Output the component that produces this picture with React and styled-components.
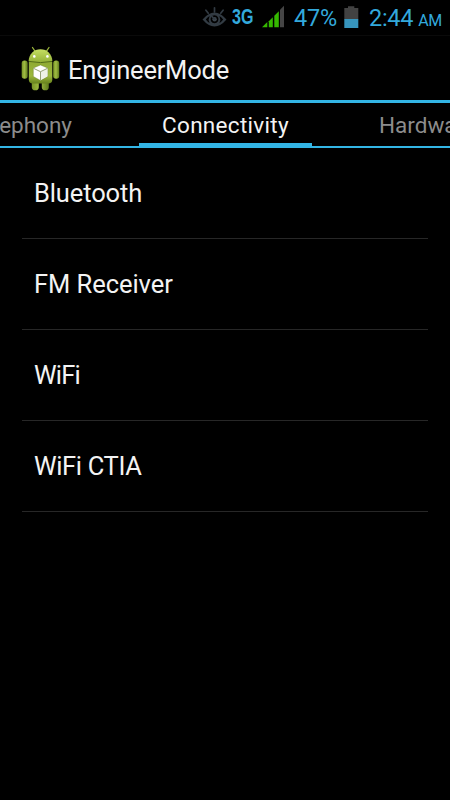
import React from 'react'
import styled, { createGlobalStyle } from 'styled-components'

const GlobalStyle = createGlobalStyle`
  body {
    margin: 0;
    background: #000;
  }
`

const Screen = styled.div`
  display: flex;
  flex-direction: column;
  width: 450px;
  height: 800px;
  overflow: hidden;
  background: #000;
  color: #f3f3f3;
  font-family: Roboto, sans-serif;
`

const StatusBar = styled.div`
  box-sizing: border-box;
  display: flex;
  align-items: flex-start;
  height: 36px;
  padding-left: 202px;
  border-bottom: 1px solid #0a0a0a;
  color: #33a9dc;

  svg {
    flex: none;
    display: block;
  }
`

const StatusItem = styled.div`
  flex: none;
  width: ${(props) => props.$width}px;
  margin-left: ${(props) => props.$gap}px;
  font-size: 23.5px;
  letter-spacing: ${(props) => props.$spacing || 0}px;
  line-height: 37px;
  white-space: nowrap;
`

const NetworkType = styled.span`
  display: block;
  font-family: 'Liberation Sans', sans-serif;
  font-size: 22px;
  font-weight: 700;
  line-height: 34px;
  transform: scaleX(0.73);
  transform-origin: 0 50%;
`

const Meridiem = styled.span`
  margin-left: 5px;
  font-size: 16px;
  letter-spacing: -0.4px;
`

const ActionBar = styled.header`
  display: flex;
  align-items: center;
  height: 64px;
  padding-left: 20px;
`

const Title = styled.h1`
  margin: 4px 0 0 8px;
  font-size: 25.5px;
  font-weight: 400;
  letter-spacing: -0.22px;
  line-height: 30px;
`

const TabStrip = styled.nav`
  box-sizing: border-box;
  display: flex;
  justify-content: space-between;
  height: 48px;
  border-top: 3px solid #33b5e5;
  box-shadow: inset 0 -2px #33b5e5;
`

const Tab = styled.div`
  box-sizing: border-box;
  display: flex;
  flex: none;
  justify-content: ${(props) => props.$align || 'center'};
  width: ${(props) => (props.$active ? 173 : 139)}px;
  height: 45px;
  padding: ${(props) => props.$padding || 0};
  border-bottom: ${(props) => (props.$active ? '5px solid #33b5e5' : 'none')};
  overflow: hidden;
  color: ${(props) => (props.$active ? '#f3f3f3' : '#8c8c8c')};
  font-size: 22.5px;
  letter-spacing: ${(props) => props.$spacing || 0}px;
  line-height: 45px;
  white-space: nowrap;
`

const List = styled.ul`
  margin: 0;
  padding: 0 22px;
  list-style: none;
`

const ListItem = styled.li`
  box-sizing: border-box;
  height: 91px;
  padding-left: 12px;
  border-bottom: 1px solid #272727;
  font-size: 25.5px;
  letter-spacing: ${(props) => props.$spacing || 0}px;
  line-height: 91px;
`

const EyeIcon = () => (
  <svg width="25" height="36" viewBox="0 0 25 36">
    <path
      fill="#323b43"
      fillRule="evenodd"
      d="M0.5 19.5Q12.5 5.5 24.5 19.5Q12.5 33.5 0.5 19.5ZM3.8 19.5Q5.5 17.2 7.6 16Q5.8 19.5 7.6 23Q5.5 21.8 3.8 19.5ZM21.2 19.5Q19.5 17.2 17.4 16Q19.2 19.5 17.4 23Q19.5 21.8 21.2 19.5ZM12.5 15.2a4 4 0 1 0 0.01 0Z"
    />
    <circle cx="12.6" cy="19.3" r="2.2" fill="#3b444c" />
    <path
      d="M10 16.6l2.6 2.6M3.9 10.2l2.4 3M12.5 7.8v4M21.1 10.2l-2.4 3"
      stroke="#323b43"
      strokeWidth="1.7"
      strokeLinecap="round"
    />
  </svg>
)

const SignalIcon = () => (
  <svg width="24" height="36" viewBox="0 0 24 36">
    <path d="M0 27.3l5.3-5.3v5.3z" fill="#35b800" />
    <path d="M6.8 27.3v-6.1l4-4v10.1z" fill="#35b800" />
    <path d="M12.3 27.3V15.7l4.5-4.5v16.1z" fill="#35b800" />
    <path d="M18 27.3V9.8l4-4v21.5z" fill="#454545" />
  </svg>
)

const BatteryIcon = () => (
  <svg width="15" height="36" viewBox="0 0 15 36">
    <path d="M0.3 8h3.7V6.2h6.3V8h4v11.2h-14z" fill="#424242" />
    <path d="M0.3 19h14v9h-14z" fill="#3795bd" />
  </svg>
)

const AndroidIcon = () => (
  <svg width="40" height="46" viewBox="0 0 40 46">
    <defs>
      <linearGradient id="head" x1="0" y1="0" x2="0" y2="1">
        <stop offset="0" stopColor="#c6df62" />
        <stop offset="1" stopColor="#93b038" />
      </linearGradient>
      <linearGradient id="shell" x1="0" y1="0" x2="0" y2="1">
        <stop offset="0" stopColor="#8faa34" />
        <stop offset="0.65" stopColor="#9cb83c" />
        <stop offset="1" stopColor="#67821d" />
      </linearGradient>
      <linearGradient id="limb" x1="0" y1="0" x2="1" y2="0">
        <stop offset="0" stopColor="#789427" />
        <stop offset="0.45" stopColor="#a1bd43" />
        <stop offset="1" stopColor="#5d791d" />
      </linearGradient>
    </defs>
    <path d="M12.5 2.5l2.8 4.2M29 2.5l-2.8 4.2" stroke="#9ab43a" strokeWidth="1.3" strokeLinecap="round" />
    <path d="M11.8 32h7v10.2a3.4 3 0 0 1-7 0zM21.8 32h7v10.2a3.4 3 0 0 1-7 0z" fill="url(#limb)" />
    <rect x="1.7" y="15.6" width="6" height="18.2" rx="2.8" fill="url(#limb)" />
    <rect x="33.2" y="15.6" width="6" height="18.2" rx="2.8" fill="url(#limb)" />
    <path d="M8.8 17h23.5v17.5q0 4-4 4H12.8q-4 0-4-4z" fill="url(#shell)" />
    <path d="M8.6 16C9 9 14 4.3 20.5 4.3s11.5 4.7 11.9 11.7q-3 1.5-11.9 1.5T8.6 16z" fill="url(#head)" />
    <path d="M8.8 16.4q11.7 2.4 23.4 0" fill="none" stroke="#536c19" strokeWidth="1" />
    <circle cx="14.3" cy="11.4" r="1.3" fill="#fff" />
    <circle cx="27.4" cy="11.4" r="1.3" fill="#fff" />
    <path d="M20.5 20l7.2 3v8.5l-7.2 4-7.2-4V23z" fill="#fff" stroke="#617827" strokeWidth="0.4" />
    <path d="M20.5 26.7l6.9-3.4v8l-6.9 3.8z" fill="#eef1e6" />
    <path d="M13.5 23.3l7 3.4 7-3.4M20.5 26.7V35" fill="none" stroke="#8b9868" strokeWidth="0.9" />
  </svg>
)

const App = () => (
  <>
    <GlobalStyle />
    <Screen>
      <StatusBar>
        <EyeIcon />
        <StatusItem $gap={5} $width={22}>
          <NetworkType>3G</NetworkType>
        </StatusItem>
        <StatusItem $gap={8} $width={24}>
          <SignalIcon />
        </StatusItem>
        <StatusItem $gap={8} $width={43} $spacing={-0.15}>47%</StatusItem>
        <StatusItem $gap={7} $width={15}>
          <BatteryIcon />
        </StatusItem>
        <StatusItem $gap={10} $width={74} $spacing={-0.3}>
          2:44<Meridiem>AM</Meridiem>
        </StatusItem>
      </StatusBar>
      <ActionBar>
        <AndroidIcon />
        <Title>EngineerMode</Title>
      </ActionBar>
      <TabStrip>
        <Tab $align="flex-end" $padding="0 67px 0 0">Telephony</Tab>
        <Tab $active $spacing={0.3}>Connectivity</Tab>
        <Tab $align="flex-start" $padding="0 0 0 67px">Hardware Testing</Tab>
      </TabStrip>
      <List>
        <ListItem $spacing={-0.12}>Bluetooth</ListItem>
        <ListItem $spacing={-0.05}>FM Receiver</ListItem>
        <ListItem $spacing={-0.8}>WiFi</ListItem>
        <ListItem $spacing={-0.35}>WiFi CTIA</ListItem>
      </List>
    </Screen>
  </>
)

export default App
